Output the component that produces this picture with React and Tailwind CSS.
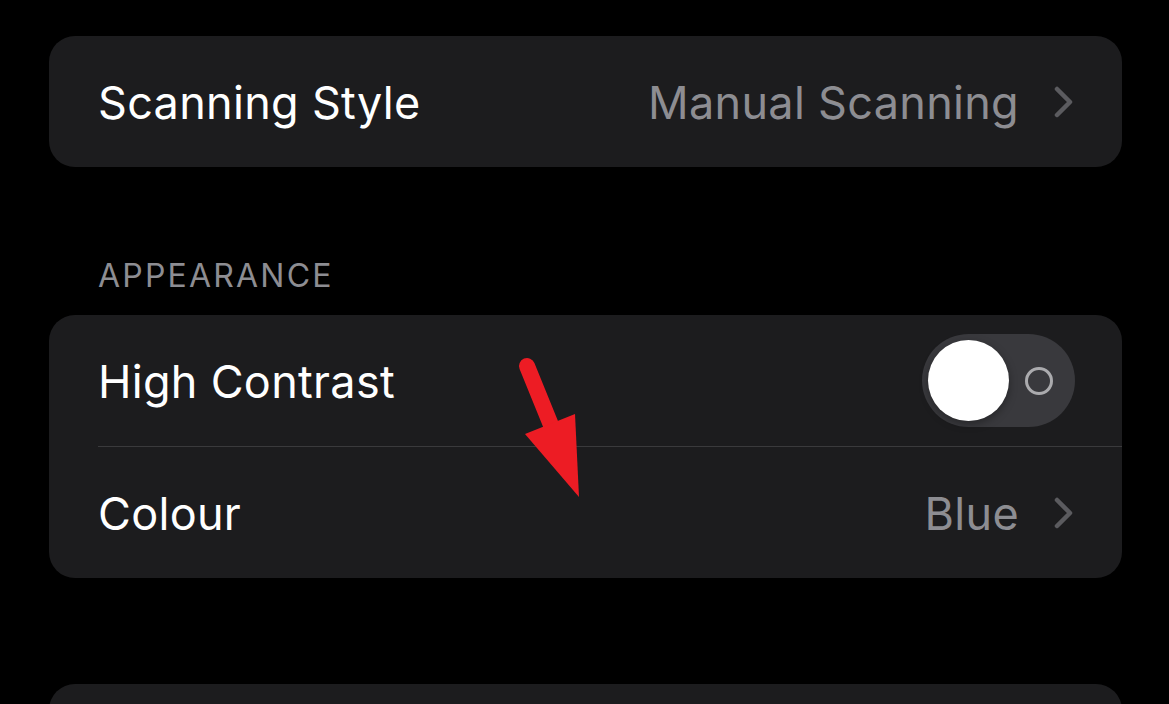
import React from 'react';

const font = { fontFamily: 'Inter, "Noto Sans", sans-serif' };

function Chevron() {
  return (
    <svg width="20" height="32" viewBox="0 0 20 32" className="shrink-0">
      <path d="M3 3 L16 16 L3 29" fill="none" stroke="#5b5b5f" strokeWidth="4.5" strokeLinecap="round" strokeLinejoin="round" />
    </svg>
  );
}

function Toggle() {
  return (
    <div className="w-[153px] h-[93px] rounded-full bg-[#39393d] flex items-center pl-[6px] pr-[22px] justify-between">
      <div className="w-[81px] h-[81px] rounded-full bg-white shadow-[0_3px_8px_rgba(0,0,0,0.35)]" />
      <div className="w-[28px] h-[28px] rounded-full border-[3px] border-[#ababae]" />
    </div>
  );
}

function Row({ label, value, children }) {
  return (
    <div className="h-[131px] flex items-center justify-between pr-[48px]">
      <span className="text-[45px] leading-[54px] pt-[3px] text-white tracking-[0.3px]">{label}</span>
      {children ? (
        children
      ) : (
        <div className="flex items-center gap-[35px]">
          <span className="text-[45px] leading-[54px] pt-[3px] text-[#8d8d92] tracking-[0.3px]">{value}</span>
          <Chevron />
        </div>
      )}
    </div>
  );
}

export default function App() {
  return (
    <div className="w-[1169px] h-[704px] bg-black overflow-hidden relative" style={font}>
      <div className="pt-[36px] pl-[49px] pr-[47px]">
        <div className="bg-[#1c1c1e] rounded-[26px] pl-[49px]">
          <Row label="Scanning Style" value="Manual Scanning" />
        </div>

        <div className="pt-[88px] pb-[19px] pl-[49px] text-[32px] leading-[41px] text-[#8d8d92] tracking-[2.2px]">
          APPEARANCE
        </div>

        <div className="bg-[#1c1c1e] rounded-[26px] pl-[49px]">
          <Row label="High Contrast">
            <div className="-mr-[1px]">
              <Toggle />
            </div>
          </Row>
          <div className="h-px bg-[#3a3a3c]" />
          <Row label="Colour" value="Blue" />
        </div>

        <div className="mt-[106px] bg-[#1c1c1e] rounded-t-[26px] h-[60px]" />
      </div>

      <svg className="absolute left-0 top-0 pointer-events-none" width="1169" height="704">
        <line x1="527" y1="366" x2="553" y2="430" stroke="#ed1c24" strokeWidth="16" strokeLinecap="round" />
        <polygon points="525,434 575,414 579,497" fill="#ed1c24" />
      </svg>
    </div>
  );
}
